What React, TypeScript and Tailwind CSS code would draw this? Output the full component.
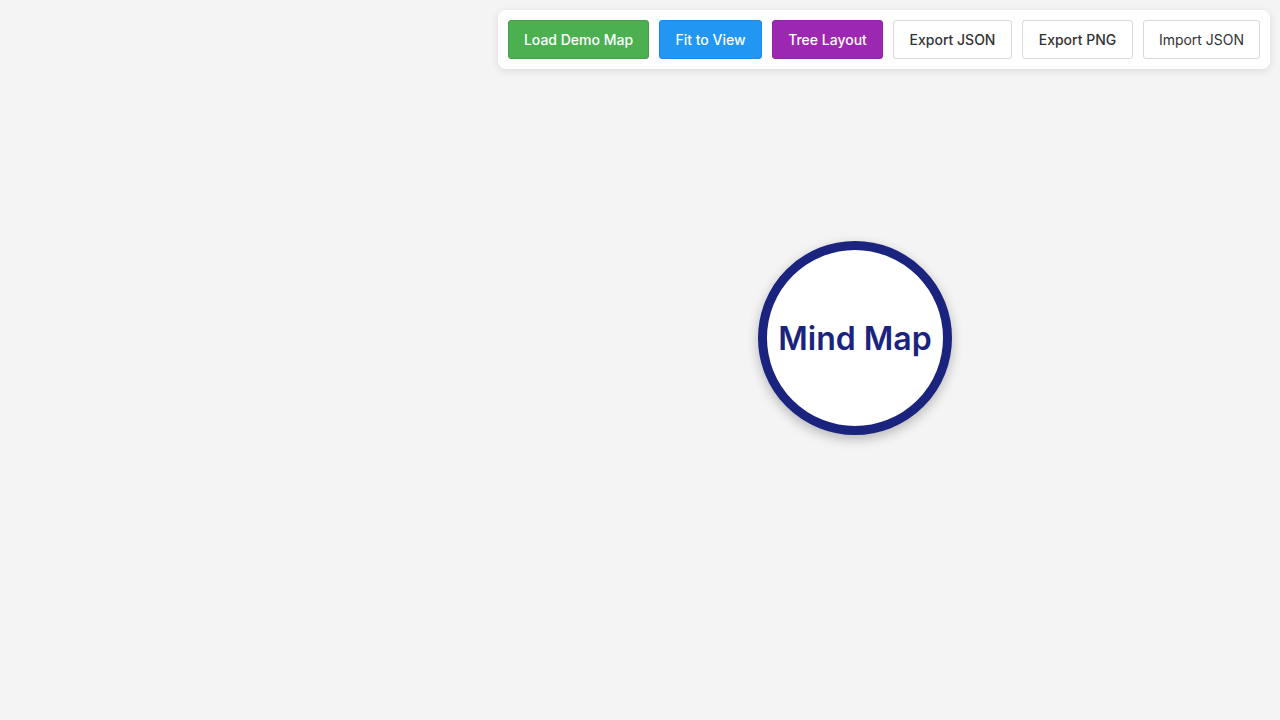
import React from "react";

const buttons = [
  { label: "Load Demo Map", cls: "bg-[#4caf50] text-white border-[#43a047] w-[141px] font-medium" },
  { label: "Fit to View", cls: "bg-[#2196f3] text-white border-[#1e88e5] w-[103px] font-medium" },
  { label: "Tree Layout", cls: "bg-[#9c27b0] text-white border-[#8e24aa] w-[111px] font-medium" },
  { label: "Export JSON", cls: "bg-white text-[#333] border-[#d9d9d9] w-[119px] font-medium" },
  { label: "Export PNG", cls: "bg-white text-[#333] border-[#d9d9d9] w-[111px] font-medium" },
  { label: "Import JSON", cls: "bg-white text-[#333] border-[#d9d9d9] w-[117px] font-normal" },
];

export default function App() {
  return (
    <div className="relative w-full h-[720px] overflow-hidden bg-[#f4f4f4] font-['Inter',sans-serif]">
      {/* toolbar */}
      <div className="absolute top-[10px] right-[10px] flex items-center gap-[10px] p-[10px] bg-white rounded-lg shadow-[0_2px_8px_rgba(0,0,0,0.1)]">
        {buttons.map((b) => (
          <button
            key={b.label}
            className={`h-[39px] rounded-[3px] border text-[14px] flex items-center justify-center ${b.cls}`}
          >
            {b.label}
          </button>
        ))}
      </div>

      {/* root node */}
      <div className="absolute left-[758px] top-[241px] w-[194px] h-[194px] rounded-full bg-white border-[9px] border-[#1a237e] shadow-[0_4px_12px_rgba(0,0,0,0.25)] flex items-center justify-center">
        <span className="text-[32px] font-semibold text-[#1a237e] leading-none mt-[2px]">Mind Map</span>
      </div>
    </div>
  );
}
